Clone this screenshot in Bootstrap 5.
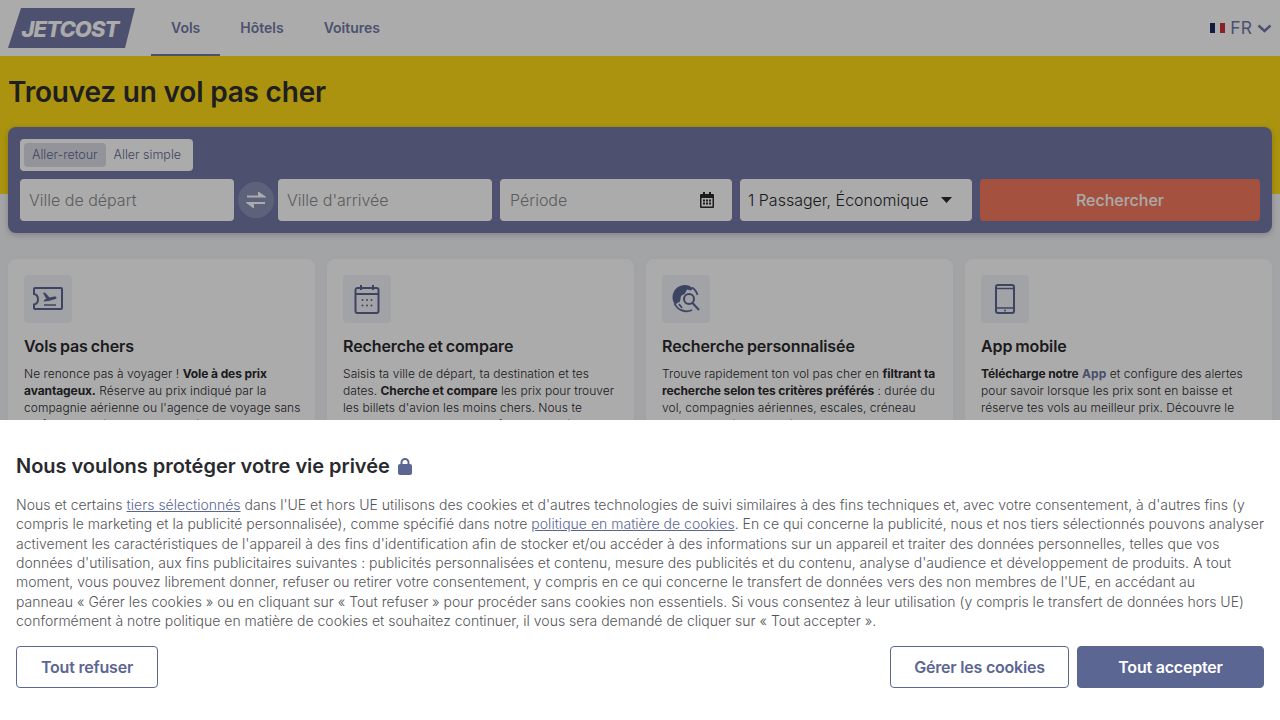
<!DOCTYPE html>
<html lang="fr">
<head>
<meta charset="utf-8">
<title>Jetcost</title>
<link href="https://cdn.jsdelivr.net/npm/bootstrap@5.3.0/dist/css/bootstrap.min.css" rel="stylesheet">
<style>
:root{--jc:#5c6693;--jcd:#2a2a2e}
html,body{height:100%;overflow:hidden}
body{font-family:Inter,"Liberation Sans",sans-serif;background:#f4f5f8;color:var(--jcd)}
.veil{position:fixed;inset:0;background:rgba(0,0,0,.33);z-index:10}
.topbar{height:56px;background:#fff;padding:0 8px}
.logo-box{width:127px;height:40px}
.nav-tab{height:56px;padding:0 20px;font-size:14px;font-weight:600;color:#737aa6;text-decoration:none;display:flex;align-items:center;border-bottom:2px solid transparent;letter-spacing:0}
.nav-tab.on{border-bottom-color:#737aa6}
.tabs-row{margin-left:16px}
.lang{color:#737aa6;font-size:17.5px;gap:5px;letter-spacing:.1px}
.hero{background:#ffdc17;height:138px;padding:20px 8px 0}
.hero h1{font-size:28px;font-weight:600;line-height:32px;margin:0;letter-spacing:-.2px;color:#2f2f33}
.searchbox{background:#7379a6;border-radius:8px;margin:-67px 8px 0;padding:12px;height:106px;position:relative;box-shadow:0 2px 6px rgba(0,0,0,.2)}
.triptype{background:#fff;border-radius:4px;padding:4px;width:173px;height:32px;font-size:12.5px;font-weight:300;color:#5c6693}
.triptype span{padding:0 8px;display:flex;align-items:center;border-radius:4px;white-space:nowrap}
.triptype .on{background:#dcdde6}
.fieldrow{margin-top:8px;height:42px}
.fld{background:#fff;border-radius:4px;height:42px;font-size:16px;font-weight:300;padding:0 9px;display:flex;align-items:center;color:#8b8b8f}
.f1{width:214px}.f3{width:232px;justify-content:space-between;padding:0 18px 0 10px}
.f4{width:232px;color:#2a2a2e;justify-content:space-between;padding:0 20px 0 8px;margin-left:8px}
.swapper{width:36px;height:36px;border-radius:50%;background:#8b92b8;margin:0 4px;flex:none}
.gobtn{width:280px;height:42px;border:0;border-radius:4px;background:#f77a60;color:#fff;font-size:16px;font-weight:500;margin-left:8px}
.benefits{padding:26px 8px 0}
.benefits .row{--bs-gutter-x:12px}
.perk{background:#fff;border-radius:8px;padding:16px;height:240px;box-shadow:0 0 6px rgba(0,0,0,.03)}
.perk-ico{width:48px;height:48px;background:#f2f3f8;border-radius:4px;display:flex;align-items:center;justify-content:center;margin-bottom:13px}
.perk h3{font-size:16px;font-weight:600;line-height:20px;margin:0 0 9px;letter-spacing:-.1px;word-spacing:-1px}
.perk p{font-size:12px;font-weight:300;line-height:17px;margin:0 -3px 0 0;color:#2a2a2e;letter-spacing:.05px}
.perk b{font-weight:700;letter-spacing:-.1px}
.perk a{color:#6d76a3;font-weight:700;text-decoration:none}
.cookie{position:fixed;left:0;right:0;bottom:0;height:300px;background:#fff;z-index:20;padding:32px 16px 0}
.cookie h2{font-size:20px;font-weight:600;line-height:28px;margin:0 0 15px;letter-spacing:-.03px;color:#2a2a2e}
.lock-ico{margin:0 0 -2px 3px}
.cookie p{font-size:14px;font-weight:300;line-height:19.33px;margin:0;color:#55555a;letter-spacing:.01px}
.cookie p a{color:var(--jc)}
.actions{position:absolute;left:16px;right:16px;top:226px}
.cbtn{height:42px;font-size:16px;font-weight:600;border:1px solid var(--jc);color:var(--jc);background:#fff;border-radius:4px;letter-spacing:-.2px;padding:0}
.cbtn.solid{background:var(--jc);color:#fff}
.w1{width:142px}.w2{width:179px}.w3{width:187px}
</style>
</head>
<body>
<header class="topbar d-flex align-items-center">
  <svg class="logo-box" viewBox="0 0 127 40"><polygon points="13,0 127,0 117,40 0,40" fill="#737aa6"/><text x="62" y="28.5" text-anchor="middle" font-family="Inter,sans-serif" font-size="22" font-weight="800" font-style="italic" fill="#fff" letter-spacing="-.9">JETCOST</text></svg>
  <nav class="d-flex tabs-row">
    <a class="nav-tab on" href="#">Vols</a>
    <a class="nav-tab" href="#">Hôtels</a>
    <a class="nav-tab" href="#">Voitures</a>
  </nav>
  <div class="lang ms-auto d-flex align-items-center">
    <svg width="15" height="10" viewBox="0 0 15 10"><rect width="5" height="10" fill="#1a2a5e"/><rect x="5" width="5" height="10" fill="#fff"/><rect x="10" width="5" height="10" fill="#d0303c"/></svg>
    <span>FR</span>
    <svg width="15" height="9" viewBox="0 0 15 9"><path d="M1.500 1.500 7.500 7 13.500 1.500" fill="none" stroke="#737aa6" stroke-width="2.400"/></svg>
  </div>
</header>
<section class="hero"><h1>Trouvez un vol pas cher</h1></section>
<section class="searchbox">
  <div class="triptype d-flex"><span class="on">Aller-retour</span><span>Aller simple</span></div>
  <div class="fieldrow d-flex align-items-center">
    <div class="fld f1">Ville de départ</div>
    <div class="swapper d-flex align-items-center justify-content-center">
      <svg width="20" height="16" viewBox="0 0 20 16"><path d="M1 4.500h13M13 1l5 3.500-5 0zM19 11H6M7 14.800l-5-3.800 5 0z" stroke="#fff" stroke-width="2" fill="#fff"/></svg>
    </div>
    <div class="fld f1">Ville d'arrivée</div>
    <div class="fld f3 ms-2">Période
      <svg width="14" height="16" viewBox="0 0 14 16"><path fill="#2a2a2e" d="M3 0h2v2h4V0h2v2h2a1 1 0 0 1 1 1v12a1 1 0 0 1-1 1H1a1 1 0 0 1-1-1V3a1 1 0 0 1 1-1h2zM1.500 6v8.500h11V6z"/><path fill="#2a2a2e" d="M3 7.500h2v2H3zM6 7.500h2v2H6zM9 7.500h2v2H9zM3 10.500h2v2H3zM6 10.500h2v2H6zM9 10.500h2v2H9z"/></svg>
    </div>
    <div class="fld f4">1 Passager, Économique
      <svg width="11" height="6" viewBox="0 0 11 6"><path d="M0 0h11L5.500 6z" fill="#2a2a2e"/></svg>
    </div>
    <button class="gobtn" type="button">Rechercher</button>
  </div>
</section>
<section class="benefits">
  <div class="row">
    <div class="col-3"><div class="perk">
      <div class="perk-ico"><svg width="32" height="26" viewBox="0 0 32 26"><path d="M3 2h26a1 1 0 0 1 1 1v19a1 1 0 0 1-1 1H3a1 1 0 0 1-1-1v-3.500c3-.5 4-2.500 4-5s-1-5-4-5.500V3a1 1 0 0 1 1-1z" fill="none" stroke="#5c6693" stroke-width="2"/><path d="M11 7l2-.5 4.500 5 4.500-1c2.500-.5 3.500 1.500 1.500 2.500l-7 2-5 .5 1-2 2-.5-1-1.500z" fill="#5c6693"/><path d="M12 19h12" stroke="#5c6693" stroke-width="1.500"/></svg></div>
      <h3>Vols pas chers</h3>
      <p>Ne renonce pas à voyager ! <b>Vole à des prix avantageux.</b> Réserve au prix indiqué par la compagnie aérienne ou l'agence de voyage sans de frais supplémentaires cachés.</p>
    </div></div>
    <div class="col-3"><div class="perk">
      <div class="perk-ico"><svg width="26" height="30" viewBox="0 0 26 30"><path d="M3.500 4h19a2 2 0 0 1 2 2v21a2 2 0 0 1-2 2h-19a2 2 0 0 1-2-2V6a2 2 0 0 1 2-2zM1.500 10h23M7 1v5M19 1v5" fill="none" stroke="#5c6693" stroke-width="2"/><g fill="#5c6693"><circle cx="8.500" cy="16" r="1"/><circle cx="13" cy="16" r="1"/><circle cx="17.500" cy="16" r="1"/><circle cx="8.500" cy="21.500" r="1"/><circle cx="13" cy="21.500" r="1"/><circle cx="17.500" cy="21.500" r="1"/></g></svg></div>
      <h3>Recherche et compare</h3>
      <p>Saisis ta ville de départ, ta destination et tes dates. <b>Cherche et compare</b> les prix pour trouver les billets d'avion les moins chers. Nous te proposons les meilleurs tarifs du marché.</p>
    </div></div>
    <div class="col-3"><div class="perk">
      <div class="perk-ico"><svg width="30" height="30" viewBox="0 0 30 30"><path d="M14 1C7 1 1.500 6.500 1.500 13c0 3 1 5.500 2.500 7.500l5-3 1-5.500 4-2.500 2-4 4 1 2-2C19.500 2 17 1 14 1z" fill="#5c6693"/><path d="M21 3.500A12.500 12.500 0 0 1 26.500 11M3.500 19.500A13 13 0 0 0 21 26M8 20l3 4" fill="none" stroke="#5c6693" stroke-width="1.800"/><circle cx="18" cy="15" r="5" fill="none" stroke="#5c6693" stroke-width="2"/><path d="M21.500 19l6.500 7" stroke="#5c6693" stroke-width="2"/></svg></div>
      <h3>Recherche personnalisée</h3>
      <p>Trouve rapidement ton vol pas cher en <b>filtrant ta recherche selon tes critères préférés</b> : durée du vol, compagnies aériennes, escales, créneau horaire de départ ou aéroport de ton choix.</p>
    </div></div>
    <div class="col-3"><div class="perk">
      <div class="perk-ico"><svg width="20" height="30" viewBox="0 0 20 30"><rect x="1" y="1" width="18" height="28" rx="2" fill="none" stroke="#5c6693" stroke-width="2"/><path d="M1 4.500h18M1 24h18" stroke="#5c6693" stroke-width="1.500"/><circle cx="10" cy="26.500" r="1" fill="#5c6693"/></svg></div>
      <h3>App mobile</h3>
      <p><b>Télécharge notre</b> <a href="#">App</a> et configure des alertes pour savoir lorsque les prix sont en baisse et réserve tes vols au meilleur prix. Découvre le moins cher de tous les voyages en un coup d'œil.</p>
    </div></div>
  </div>
</section>
<div class="veil"></div>
<aside class="cookie">
  <h2>Nous voulons protéger votre vie privée <svg width="14" height="17" viewBox="0 0 14 17" class="align-baseline lock-ico"><path d="M3.500 7V4.500a3.500 3.500 0 0 1 7 0V7" fill="none" stroke="#5c6693" stroke-width="2"/><rect y="6" width="14" height="11" rx="2" fill="#5c6693"/></svg></h2>
  <p>Nous et certains <a href="#">tiers sélectionnés</a> dans l'UE et hors UE utilisons des cookies et d'autres technologies de suivi similaires à des fins techniques et, avec votre consentement, à d'autres fins (y compris le marketing et la publicité personnalisée), comme spécifié dans notre <a href="#">politique en matière de cookies</a>. En ce qui concerne la publicité, nous et nos tiers sélectionnés pouvons analyser activement les caractéristiques de l'appareil à des fins d'identification afin de stocker et/ou accéder à des informations sur un appareil et traiter des données personnelles, telles que vos données d'utilisation, aux fins publicitaires suivantes : publicités personnalisées et contenu, mesure des publicités et du contenu, analyse d'audience et développement de produits. A tout moment, vous pouvez librement donner, refuser ou retirer votre consentement, y compris en ce qui concerne le transfert de données vers des non membres de l'UE, en accédant au<br>panneau « Gérer les cookies » ou en cliquant sur « Tout refuser » pour procéder sans cookies non essentiels. Si vous consentez à leur utilisation (y compris le transfert de données hors UE) conformément à notre politique en matière de cookies et souhaitez continuer, il vous sera demandé de cliquer sur « Tout accepter ».</p>
  <div class="actions d-flex">
    <button class="cbtn w1" type="button">Tout refuser</button>
    <button class="cbtn w2 ms-auto" type="button">Gérer les cookies</button>
    <button class="cbtn solid w3 ms-2" type="button">Tout accepter</button>
  </div>
</aside>
</body>
</html>
